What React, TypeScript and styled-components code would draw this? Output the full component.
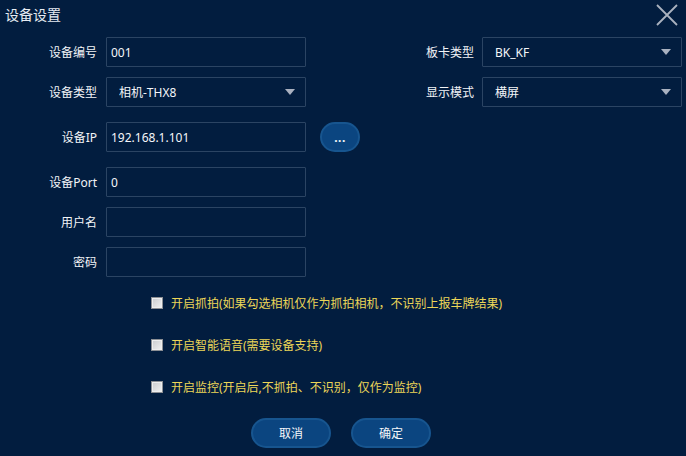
import React from "react";
import styled, { createGlobalStyle } from "styled-components";

const GlobalStyle = createGlobalStyle`
  html, body {
    margin: 0;
    padding: 0;
    background: #021d3f;
  }
  body {
    font-family: "Noto Sans", "Noto Sans CJK SC", sans-serif;
    font-size: 12px;
    color: #f2f4f7;
  }
`;

const Dialog = styled.div`
  width: 686px;
  height: 456px;
  background: #021d3f;
  display: flex;
  flex-direction: column;
  box-sizing: border-box;
`;

const Header = styled.div`
  display: flex;
  justify-content: space-between;
  align-items: flex-start;
  height: 30px;
  padding: 0 8px 0 5px;
`;

const Title = styled.h1`
  margin: 0;
  font-size: 14px;
  font-weight: normal;
  line-height: 30px;
  color: #e6ebf2;
`;

const CloseButton = styled.button`
  margin-top: 4px;
  width: 22px;
  height: 22px;
  padding: 0;
  border: none;
  background: none;
  cursor: pointer;
  display: flex;
`;

const Row = styled.div<{ $top: number }>`
  display: flex;
  align-items: center;
  justify-content: space-between;
  height: 30px;
  margin-top: ${(p) => p.$top}px;
  padding-right: 4px;
`;

const Field = styled.div`
  display: flex;
  align-items: center;
`;

const Label = styled.label<{ $width?: number }>`
  width: ${(p) => (p.$width ? `${p.$width}px` : "auto")};
  text-align: right;
  padding-right: ${(p) => (p.$width ? 9 : 8)}px;
  color: #f2f4f7;
  white-space: nowrap;
`;

const TextInput = styled.input`
  box-sizing: border-box;
  width: 200px;
  height: 30px;
  border: 1px solid #2b4463;
  border-radius: 1px;
  background: transparent;
  color: #f4f6f9;
  font: inherit;
  padding: 0 4px;
  outline: none;
`;

const SelectWrap = styled.div`
  position: relative;
  width: 200px;
  height: 30px;

  &::after {
    content: "";
    position: absolute;
    right: 11px;
    top: 12px;
    border-left: 5px solid transparent;
    border-right: 5px solid transparent;
    border-top: 6px solid #a9b1c0;
    pointer-events: none;
  }
`;

const Select = styled.select`
  appearance: none;
  box-sizing: border-box;
  width: 100%;
  height: 100%;
  border: 1px solid #2b4463;
  border-radius: 1px;
  background: transparent;
  color: #f4f6f9;
  font: inherit;
  padding: 0 12px;
  outline: none;

  option {
    background: #021d3f;
  }
`;

const PillButton = styled.button<{ $width: number }>`
  box-sizing: border-box;
  width: ${(p) => p.$width}px;
  height: 30px;
  border-radius: 15px;
  border: 2px solid #17558f;
  background: #0b4580;
  color: #f4f6f9;
  font: inherit;
  font-size: 12px;
  cursor: pointer;
  padding: 0;
`;

const MoreButton = styled(PillButton)`
  margin-left: 14px;
  font-weight: bold;
  letter-spacing: 0.5px;
`;

const Options = styled.div`
  display: flex;
  flex-direction: column;
  gap: 22px;
  margin-top: 16px;
  padding-left: 151px;
`;

const Option = styled.label`
  display: flex;
  align-items: center;
  height: 20px;
  gap: 8px;
  color: #ecd658;
  cursor: pointer;
`;

const Box = styled.span`
  box-sizing: border-box;
  width: 12px;
  height: 12px;
  border: 1px solid #8c8f94;
  background: linear-gradient(135deg, #c9cbce, #f2f2f2);
  box-shadow: inset 0 0 0 1px #eeeeee;
`;

const Actions = styled.div`
  display: flex;
  justify-content: center;
  gap: 20px;
  margin-top: 21px;
  padding-right: 4px;
`;

export default function App() {
  return (
    <>
      <GlobalStyle />
      <Dialog>
        <Header>
          <Title>设备设置</Title>
          <CloseButton aria-label="close">
            <svg width="22" height="22" viewBox="0 0 22 22">
              <path d="M1 1 L21 21 M21 1 L1 21" stroke="#aab2bf" strokeWidth="1.8" />
            </svg>
          </CloseButton>
        </Header>

        <Row $top={7}>
          <Field>
            <Label $width={97}>设备编号</Label>
            <TextInput defaultValue="001" />
          </Field>
          <Field>
            <Label>板卡类型</Label>
            <SelectWrap>
              <Select defaultValue="BK_KF">
                <option>BK_KF</option>
              </Select>
            </SelectWrap>
          </Field>
        </Row>

        <Row $top={10}>
          <Field>
            <Label $width={97}>设备类型</Label>
            <SelectWrap>
              <Select defaultValue="相机-THX8">
                <option>相机-THX8</option>
              </Select>
            </SelectWrap>
          </Field>
          <Field>
            <Label>显示模式</Label>
            <SelectWrap>
              <Select defaultValue="横屏">
                <option>横屏</option>
                <option>竖屏</option>
              </Select>
            </SelectWrap>
          </Field>
        </Row>

        <Row $top={15}>
          <Field>
            <Label $width={97}>设备IP</Label>
            <TextInput defaultValue="192.168.1.101" />
            <MoreButton $width={40}>...</MoreButton>
          </Field>
        </Row>

        <Row $top={15}>
          <Field>
            <Label $width={97}>设备Port</Label>
            <TextInput defaultValue="0" />
          </Field>
        </Row>

        <Row $top={10}>
          <Field>
            <Label $width={97}>用户名</Label>
            <TextInput />
          </Field>
        </Row>

        <Row $top={10}>
          <Field>
            <Label $width={97}>密码</Label>
            <TextInput type="password" />
          </Field>
        </Row>

        <Options>
          <Option>
            <Box />
            开启抓拍(如果勾选相机仅作为抓拍相机，不识别上报车牌结果)
          </Option>
          <Option>
            <Box />
            开启智能语音(需要设备支持)
          </Option>
          <Option>
            <Box />
            开启监控(开启后,不抓拍、不识别，仅作为监控)
          </Option>
        </Options>

        <Actions>
          <PillButton $width={80}>取消</PillButton>
          <PillButton $width={80}>确定</PillButton>
        </Actions>
      </Dialog>
    </>
  );
}
